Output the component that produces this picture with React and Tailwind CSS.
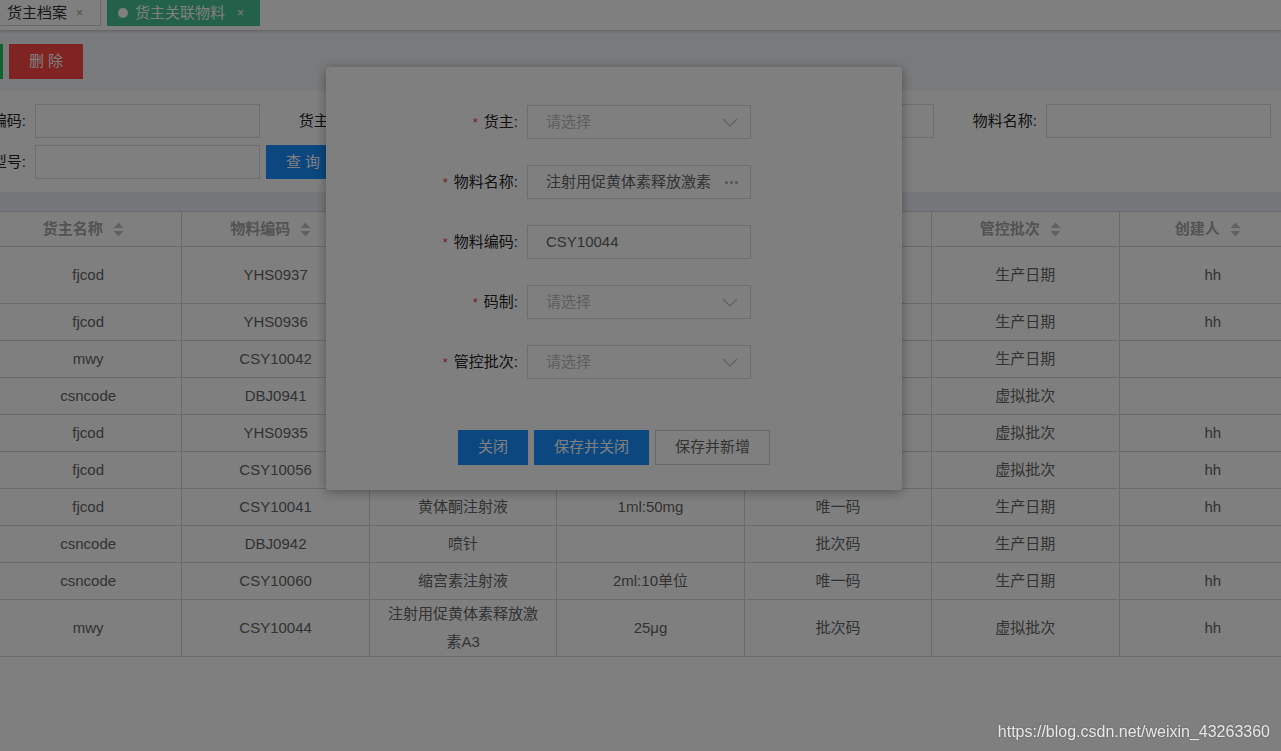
import React from 'react';

const columns = ['货主名称', '物料编码', '物料名称', '规格型号', '码制', '管控批次', '创建人'];

const rows = [
  { owner: 'fjcod', code: 'YHS0937', name: '注射用促黄体素释放激素A2', spec: '25μg', type: '批次码', batch: '生产日期', creator: 'hh' },
  { owner: 'fjcod', code: 'YHS0936', name: '黄体酮注射液', spec: '1ml:20mg', type: '唯一码', batch: '生产日期', creator: 'hh' },
  { owner: 'mwy', code: 'CSY10042', name: '缩宫素注射液', spec: '1ml:10单位', type: '唯一码', batch: '生产日期', creator: '' },
  { owner: 'csncode', code: 'DBJ0941', name: '喷针', spec: '', type: '批次码', batch: '虚拟批次', creator: '' },
  { owner: 'fjcod', code: 'YHS0935', name: '氯前列醇钠', spec: '2ml:0.2mg', type: '唯一码', batch: '虚拟批次', creator: 'hh' },
  { owner: 'fjcod', code: 'CSY10056', name: '苯甲酸雌二醇', spec: '2ml:4mg', type: '批次码', batch: '虚拟批次', creator: 'hh' },
  { owner: 'fjcod', code: 'CSY10041', name: '黄体酮注射液', spec: '1ml:50mg', type: '唯一码', batch: '生产日期', creator: 'hh' },
  { owner: 'csncode', code: 'DBJ0942', name: '喷针', spec: '', type: '批次码', batch: '生产日期', creator: '' },
  { owner: 'csncode', code: 'CSY10060', name: '缩宫素注射液', spec: '2ml:10单位', type: '唯一码', batch: '生产日期', creator: 'hh' },
  { owner: 'mwy', code: 'CSY10044', name: '注射用促黄体素释放激素A3', spec: '25μg', type: '批次码', batch: '虚拟批次', creator: 'hh' },
];

const SortIcon = () => (
  <svg width="11" height="15" viewBox="0 0 11 15" className="shrink-0">
    <path d="M0.5 6 L5.5 0.5 L10.5 6 Z" fill="#c2c2c2" />
    <path d="M0.5 9 L10.5 9 L5.5 14.5 Z" fill="#c2c2c2" />
  </svg>
);

const Chevron = () => (
  <svg width="16" height="9" viewBox="0 0 16 9">
    <polyline points="1,1 8,8 15,1" fill="none" stroke="#c4c4c4" strokeWidth="1.3" />
  </svg>
);

const SearchField = ({ label }) => (
  <div className="flex items-center">
    <label className="flex-1 text-right pr-[9px] text-[15px] leading-[34px] text-[#222] whitespace-nowrap">{label}</label>
    <div className="w-[225px] h-[34px] border border-[#dcdcdc] bg-white" />
  </div>
);

const FormRow = ({ label, children }) => (
  <div className="flex items-center h-[34px]">
    <div className="w-[192px] text-right text-[15px] leading-[34px] text-[#222] whitespace-nowrap">
      <span className="text-[#f04040] text-[13px] mr-[6px]">*</span>
      {label}:
    </div>
    <div className="ml-[9px] w-[224px] h-[34px] border border-[#dcdcdc] bg-white flex items-center justify-between pl-[18px] pr-[12px] text-[15px] leading-[32px]">
      {children}
    </div>
  </div>
);

const Placeholder = () => (
  <>
    <span className="text-[#bdbdbd]">请选择</span>
    <Chevron />
  </>
);

export default function App() {
  return (
    <div className="relative min-h-screen bg-white overflow-hidden font-['Liberation_Sans','Noto_Sans_CJK_SC',sans-serif]">
      {/* tabs */}
      <div className="h-[30px] flex items-start bg-white shadow-[0_1px_3px_rgba(0,0,0,0.25)] relative z-10">
        <div className="-ml-[10px] w-[111px] h-[26px] border border-t-0 border-[#d2d2d2] flex items-center pl-[16px] gap-[9px] text-[15px] leading-[26px] text-[#333]">
          <span>货主档案</span>
          <span className="text-[12px] text-[#999]">×</span>
        </div>
        <div className="ml-[6px] w-[153px] h-[26px] bg-[#46c391] flex items-center pl-[11px] text-[15px] leading-[26px] text-white">
          <span className="w-[10px] h-[10px] rounded-full bg-white" />
          <span className="ml-[7px]">货主关联物料</span>
          <span className="ml-[12px] text-[12px]">×</span>
        </div>
      </div>

      {/* toolbar */}
      <div className="h-[61px] bg-[#f3f5f9] pt-[14px] flex gap-[6px] -ml-[71px]">
        <button className="w-[74px] h-[35px] bg-[#1fc460] text-white text-[15px]">新 增</button>
        <button className="w-[74px] h-[35px] bg-[#ff4646] text-white text-[15px]">删 除</button>
      </div>

      {/* search */}
      <div className="bg-white pt-[13px] pb-[13px]">
        <div className="-ml-[77px] w-[1348px] grid grid-cols-4 gap-y-[7px]">
          <SearchField label="物料编码:" />
          <SearchField label="货主名称:" />
          <SearchField label="物料编码:" />
          <SearchField label="物料名称:" />
          <SearchField label="规格型号:" />
          <div className="flex items-center">
            <button className="ml-[6px] w-[74px] h-[34px] bg-[#1890ff] text-white text-[15px]">查 询</button>
          </div>
        </div>
      </div>

      <div className="h-[19px] bg-[#eceff5]" />

      {/* table */}
      <table className="-ml-[6px] w-[1313px] table-fixed border-collapse text-[15px]">
        <thead>
          <tr>
            {columns.map((c) => (
              <th key={c} className="h-[35px] p-0 pr-[10px] border border-[#d6d6d6] font-bold text-[#a6a6a6] leading-[28px]">
                <div className="inline-flex items-center gap-[10px]">
                  {c}
                  <SortIcon />
                </div>
              </th>
            ))}
          </tr>
        </thead>
        <tbody>
          {rows.map((r, i) => (
            <tr key={i}>
              {[r.owner, r.code, r.name, r.spec, r.type, r.batch, r.creator].map((v, j) => (
                <td key={j} className="h-[37px] px-[15px] py-0 border border-[#d6d6d6] text-center text-[#666] leading-[28px]">
                  {v}
                </td>
              ))}
            </tr>
          ))}
        </tbody>
      </table>

      {/* dialog */}
      <div className="absolute left-[326px] top-[67px] w-[576px] h-[423px] bg-white rounded-[3px] shadow-[0_2px_12px_rgba(0,0,0,0.35)] z-30 pt-[38px]">
        <div className="flex flex-col gap-[26px]">
          <FormRow label="货主">
            <Placeholder />
          </FormRow>
          <FormRow label="物料名称">
            <span className="text-[#666] whitespace-nowrap overflow-hidden">注射用促黄体素释放激素</span>
            <span className="flex gap-[2px] ml-[6px] shrink-0">
              <span className="w-[3px] h-[3px] rounded-full bg-[#aaa]" />
              <span className="w-[3px] h-[3px] rounded-full bg-[#aaa]" />
              <span className="w-[3px] h-[3px] rounded-full bg-[#aaa]" />
            </span>
          </FormRow>
          <FormRow label="物料编码">
            <span className="text-[#666]">CSY10044</span>
          </FormRow>
          <FormRow label="码制">
            <Placeholder />
          </FormRow>
          <FormRow label="管控批次">
            <Placeholder />
          </FormRow>
        </div>
        <div className="mt-[51px] flex justify-center gap-[6px] text-[15px]">
          <button className="w-[70px] h-[35px] bg-[#1890ff] text-white">关闭</button>
          <button className="w-[115px] h-[35px] bg-[#1890ff] text-white">保存并关闭</button>
          <button className="w-[115px] h-[35px] bg-white border border-[#d0d0d0] text-[#666]">保存并新增</button>
        </div>
      </div>

      {/* mask */}
      <div className="fixed inset-0 bg-black/50 z-40" />

      <div className="fixed right-[11px] bottom-[9px] z-50 text-[16px] leading-[20px] text-[#e8e8e8] [text-shadow:0_0_2px_rgba(0,0,0,0.35)]">
        https://blog.csdn.net/weixin_43263360
      </div>
    </div>
  );
}
